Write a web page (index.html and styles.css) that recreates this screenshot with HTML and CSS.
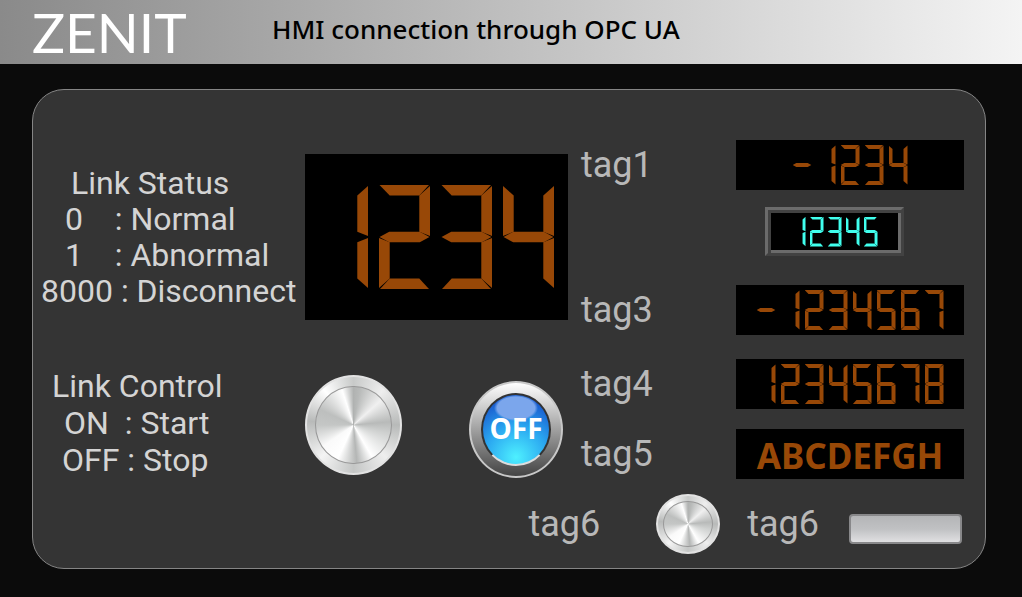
FILE: index.html
```html
<!DOCTYPE html>
<html lang="en">
<head>
  <meta charset="UTF-8">
  <meta name="viewport" content="width=device-width, initial-scale=1">
  <link rel="stylesheet" href="styles.css">
  <title>HMI connection through OPC UA</title>
</head>
<body>
  <header class="topbar">
    <div class="logo">ZENIT</div>
    <h1>HMI connection through OPC UA</h1>
  </header>

  <main class="panel">
    <div class="board">
      <section class="left">
        <div class="status">
          <div class="legend legend-status">
            <h2>Link Status</h2>
            <p class="code">0    : Normal</p>
            <p class="code">1    : Abnormal</p>
            <p>8000 : Disconnect</p>
          </div>
          <output class="lcd lcd-big">1234</output>
        </div>
        <div class="control">
          <div class="legend legend-control">
            <h2>Link Control</h2>
            <p class="on">ON  : Start</p>
            <p class="off">OFF : Stop</p>
          </div>
          <div class="buttons">
            <button type="button" class="knob" aria-label="Start link"></button>
            <button type="button" class="lamp"><span class="lens">OFF</span></button>
          </div>
        </div>
      </section>

      <section class="tags">
        <label class="tag" for="tag1">tag1</label>
        <output class="lcd" id="tag1">-1234</output>
        <output class="lcd lcd-cyan" id="tag2">12345</output>
        <label class="tag" for="tag3">tag3</label>
        <output class="lcd" id="tag3">-1234567</output>
        <label class="tag" for="tag4">tag4</label>
        <output class="lcd" id="tag4">12345678</output>
        <label class="tag" for="tag5">tag5</label>
        <output class="ascii" id="tag5">ABCDEFGH</output>
      </section>
    </div>

    <div class="bits">
      <label class="tag" for="tag6-knob">tag6</label>
      <button type="button" class="knob knob-small" id="tag6-knob"></button>
      <label class="tag" for="tag6-bar">tag6</label>
      <button type="button" class="bar" id="tag6-bar"></button>
    </div>
  </main>
  <script src="display.js"></script>
</body>
</html>
```
FILE: styles.css
```css
* {
  box-sizing: border-box;
}
body {
  margin: 0;
  background: #0b0b0b;
  font-family: Roboto, Arial, sans-serif;
  color: #d4d4d4;
}
h1, h2, p {
  margin: 0;
}
button {
  padding: 0;
  border: none;
  cursor: pointer;
}

/* header */
.topbar {
  display: flex;
  align-items: center;
  height: 64px;
  padding-left: 32px;
  background: linear-gradient(to right, #8a8a8a, #f4f4f4);
}
.logo {
  width: 240px;
  font-family: Lato, sans-serif;
  font-weight: 400;
  font-size: 55px;
  line-height: 64px;
  color: #fff;
}
.topbar h1 {
  font-family: "Noto Sans", sans-serif;
  font-weight: 500;
  font-size: 26px;
  line-height: 58px;
  padding-bottom: 6px;
  color: #000;
}

/* panel */
.panel {
  margin: 25px 36px 27px 32px;
  padding: 50px 21px 14px 8px;
  border: 1px solid #858585;
  border-radius: 32px;
  background: #343434;
}
.board {
  display: flex;
  gap: 13px;
}
.left {
  padding-top: 14px;
}
.status, .control {
  display: flex;
}
.legend {
  width: 264px;
  font-size: 32px;
}
.legend h2, .legend p {
  font-size: inherit;
  font-weight: 400;
  white-space: pre;
}
.legend-status {
  padding-top: 11px;
  line-height: 36px;
}
.legend-status h2 {
  padding-left: 30px;
}
.legend .code {
  padding-left: 24px;
}
.legend-control {
  padding: 48px 0 0 11px;
  line-height: 37px;
}
.on {
  padding-left: 12px;
}
.off {
  padding-left: 10px;
}

/* seven segment displays */
.lcd {
  display: flex;
  justify-content: center;
  align-items: center;
  gap: 5px;
  height: 50px;
  background: #000;
  color: #984807;
}
.digit {
  display: grid;
  width: 19px;
  height: 40px;
}
.seg {
  grid-area: 1 / 1;
  background: currentColor;
}
.seg-a { clip-path: polygon(1% 0, 98% 0, 79% 10%, 21% 10%); }
.seg-b { clip-path: polygon(100% 1%, 100% 49%, 79% 45%, 79% 10%); }
.seg-c { clip-path: polygon(100% 51%, 100% 99%, 79% 90%, 79% 55%); }
.seg-d { clip-path: polygon(2% 100%, 98% 100%, 79% 90%, 21% 90%); }
.seg-e { clip-path: polygon(0 51%, 0 99%, 21% 90%, 21% 55%); }
.seg-f { clip-path: polygon(0 1%, 0 49%, 21% 45%, 21% 10%); }
.seg-g { clip-path: polygon(1% 50%, 20% 45%, 80% 45%, 99% 50%, 80% 55%, 20% 55%); }

.lcd-big {
  justify-content: flex-end;
  gap: 11px;
  width: 263px;
  height: 166px;
  padding-right: 14px;
}
.lcd-big .digit {
  width: 51px;
  height: 104px;
}
.lcd-cyan {
  grid-column: 2;
  gap: 4px;
  width: 139px;
  height: 49px;
  margin: 17px 0 29px 29px;
  border: 3px solid;
  border-color: #6b6b6b #424242 #424242 #6b6b6b;
  box-shadow: inset 3px 3px #424242, inset -3px -3px #6b6b6b;
}
.lcd-cyan .digit {
  width: 14px;
  height: 30px;
  color: #40ffee;
}
.ascii {
  height: 50px;
  background: #000;
  color: #984807;
  font-family: "Noto Sans", sans-serif;
  font-weight: 700;
  font-size: 35px;
  line-height: 54px;
  text-align: center;
}

/* tags */
.tags {
  flex: 1;
  display: grid;
  grid-template-columns: 155px 1fr;
  align-content: start;
}
.tag {
  font-weight: 400;
  font-size: 36px;
  line-height: 50px;
  color: #b8b8b8;
}
#tag4 {
  margin: 24px 0 20px;
}
.tag[for="tag4"] {
  padding-top: 24px;
}

/* push buttons */
.buttons {
  display: flex;
  align-items: flex-start;
  gap: 67px;
  padding-top: 55px;
}
.knob {
  display: grid;
  place-items: center;
  width: 97px;
  height: 100px;
  border: 2px solid #e2e2e2;
  border-radius: 50%;
  background: conic-gradient(#c8cac9, #eee 40deg, #b8bab9 90deg, #eee 135deg, #c4c6c5 180deg, #f4f4f4 225deg, #b8bab9 275deg, #fff 320deg, #c8cac9);
}
.knob::before {
  content: "";
  width: 80%;
  height: 80%;
  border: 1px solid #999;
  border-radius: 50%;
  background: conic-gradient(#b0b2b1, #b8bab9 10deg, #f0f0f0 48deg, #b8bab9 85deg, #d0d2d1 105deg, #fff 150deg, #b4b6b5 175deg, #fff 205deg, #fafafa 235deg, #c4c6c5 270deg, #bdbfbe 295deg, #fff 342deg, #b0b2b1);
}
.knob-small {
  width: 64px;
  height: 60px;
}
.lamp {
  display: grid;
  place-items: center;
  width: 94px;
  height: 97px;
  margin-top: 6px;
  border: 2px solid #c8c8c8;
  border-radius: 50%;
  background: linear-gradient(#fff, #aaa 45%, #444);
}
.lens {
  display: grid;
  place-items: center;
  width: 70px;
  height: 73px;
  padding-bottom: 4px;
  border: 2px solid #333;
  border-bottom-color: #ddd;
  border-radius: 50%;
  background:
    radial-gradient(ellipse 22px 13px at 50% 13px, #7ba6ec 85%, transparent),
    radial-gradient(circle at 50% 90%, #4ef0ff, #2aa6f0 45%, #1a5fd0 80%);
  color: #fff;
  font-family: "Open Sans", sans-serif;
  font-weight: 700;
  font-size: 28px;
}

/* tag6 row */
.bits {
  display: flex;
  justify-content: flex-end;
  align-items: center;
  margin: 15px 2px 0 0;
}
.bits .knob {
  margin: 0 27px 0 56px;
}
.bar {
  width: 113px;
  height: 30px;
  margin: 10px 0 0 30px;
  border: 2px solid #88888a;
  border-radius: 4px;
  background: linear-gradient(#b4b5b7, #c0c1c3 50%, #e0e0e2);
}
```
FILE: display.js
```js
// lit segments for every character the displays can show
const SEGMENTS = {
  '-': 'g',
  '0': 'abcdef',
  '1': 'bc',
  '2': 'abdeg',
  '3': 'abcdg',
  '4': 'bcfg',
  '5': 'acdfg',
  '6': 'acdefg',
  '7': 'abc',
  '8': 'abcdefg',
  '9': 'abcdfg'
};

document.querySelectorAll('.lcd').forEach((lcd) => {
  const value = lcd.textContent.trim();
  lcd.setAttribute('aria-label', value);
  lcd.textContent = '';
  for (const ch of value) {
    const digit = document.createElement('span');
    digit.className = 'digit';
    for (const name of SEGMENTS[ch]) {
      const seg = document.createElement('span');
      seg.className = `seg seg-${name}`;
      digit.appendChild(seg);
    }
    lcd.appendChild(digit);
  }
});
```
